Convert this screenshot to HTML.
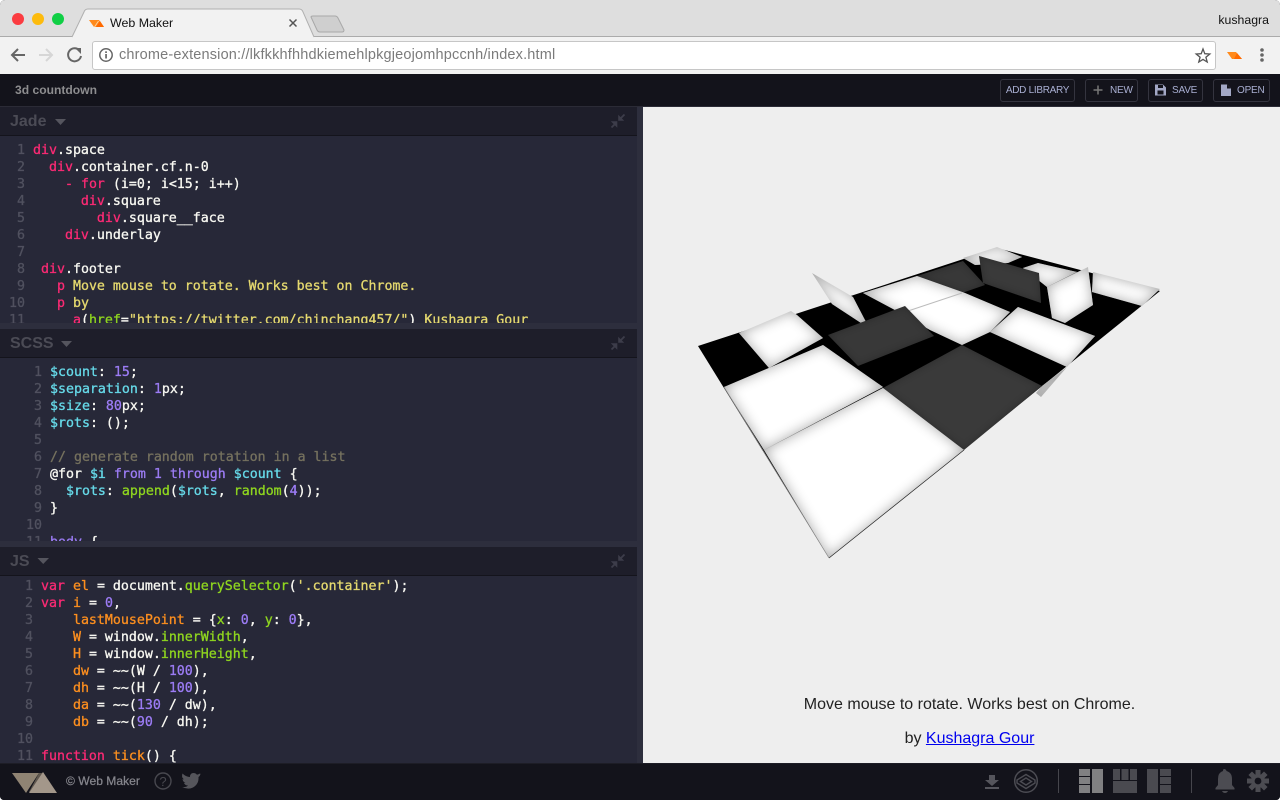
<!DOCTYPE html>
<html><head><meta charset="utf-8"><title>Web Maker</title>
<style>
html,body{margin:0;padding:0;background:#fff;width:1280px;height:800px;overflow:hidden}
#w{position:absolute;left:0;top:0;width:1280px;height:800px;overflow:hidden;border-radius:5px 5px 4px 4px;background:#12121a;font-family:"Liberation Sans",sans-serif}
.a{position:absolute}
.code{position:absolute;left:0;width:637px;background:#272838;overflow:hidden}
pre{position:absolute;margin:0;top:0;font:13.28px/17px "DejaVu Sans Mono","Liberation Mono",monospace;color:#f8f8f2;white-space:pre;-webkit-text-stroke:.3px currentColor}
pre.n{color:#50515f;text-align:right}
.hd{position:absolute;left:0;width:637px;height:28px;background:#1e1e2a;border-bottom:1px solid #14141c}
.hd b{position:absolute;left:10px;top:6px;font-size:16px;color:#4b4b55}
.sp{position:absolute;left:0;width:637px;height:6px;background:#2d2e3d}
.btn{position:absolute;top:79px;height:21px;border:1px solid #34343f;border-radius:3px;font-size:10px;line-height:20px;color:#a9afd2;white-space:nowrap;letter-spacing:-.2px}
.btn span{top:1px!important}
.k{color:#fb2a74}.w{color:#f8f8f2}.y{color:#e5d96f}.g{color:#8fd61f}.c{color:#66d9e8}.p{color:#9c7cf5}.o{color:#fd8f1f}.m{color:#75715e}
</style></head><body><div id="w">

<!-- browser chrome -->
<div class="a" style="left:0;top:0;width:1280px;height:36px;background:#dedede"></div>
<div class="a" style="left:0;top:36px;width:1280px;height:1px;background:#ababab"></div>
<div class="a" style="left:0;top:37px;width:1280px;height:37px;background:#f2f2f2"></div>
<svg class="a" style="left:0;top:0" width="360" height="74">
<circle cx="18" cy="19" r="6" fill="#fb3c41"/><circle cx="38" cy="19" r="6" fill="#fdbb0d"/><circle cx="58" cy="19" r="6" fill="#10cf45"/>
<path d="M72 37L84 12Q85 9 88 9H299Q302 9 303 12L314 37" fill="#f2f2f2" stroke="#b0b0b0" stroke-width="1"/>
<path d="M311 17Q311 16 313 16H335Q337 16 338 18L344 30Q344 32 342 32H320Q318 32 317 30Z" fill="#cfcfcf" stroke="#a8a8a8"/>
<path d="M89 20H99L104 27H94Z" fill="#ff8a1c"/><path d="M96 27L100 21L104 27Z" fill="#ff6a00"/><path d="M94 27L98 21H99L95 27Z" fill="#ffd9a8"/>
<path d="M289.500 19.500L296.500 26.500M296.500 19.500L289.500 26.500" stroke="#555" stroke-width="1.500"/>
<path d="M25 55H12M18 49L12 55L18 61" fill="none" stroke="#666" stroke-width="2"/>
<path d="M52 55H39M46 49L52 55L46 61" fill="none" stroke="#d6d6d6" stroke-width="2"/>
<path d="M79.500 50.500A6.500 6.500 0 1 0 81 56" fill="none" stroke="#666" stroke-width="2"/><path d="M75 48H81V54Z" fill="#666"/>
</svg>
<div class="a" style="left:110px;top:15px;font-size:12.4px;line-height:16px;color:#111">Web Maker</div>
<div class="a" style="left:92px;top:41px;width:1122px;height:27px;background:#fff;border:1px solid #c6c6c6;border-radius:3px"></div>
<svg class="a" style="left:97px;top:46px" width="18" height="18"><circle cx="9" cy="9" r="6.200" fill="none" stroke="#666" stroke-width="1.500"/><rect x="8.200" y="8" width="1.700" height="4.500" fill="#666"/><rect x="8.200" y="5.300" width="1.700" height="1.700" fill="#666"/></svg>
<div class="a" style="left:119px;top:47px;font-size:14.5px;line-height:17px;color:#7b7b7b;white-space:nowrap;letter-spacing:.175px"><span>chrome-extension://lkfkkhfhhdkiemehlpkgjeojomhpccnh/index.html</span></div>
<div class="a" style="top:13px;text-align:right;font-size:12.3px;line-height:14px;color:#111;white-space:nowrap;left:1198px;width:71px">kushagra</div>
<svg class="a" style="left:1190px;top:44px" width="85" height="24">
<path d="M13 5L14.800 9.700L19.800 10L15.900 13.200L17.200 18L13 15.400L8.800 18L10.100 13.200L6.200 10L11.200 9.700Z" fill="none" stroke="#555" stroke-width="1.300"/>
<path d="M37 8H46L52 15H42Z" fill="#ff8a1c"/><path d="M44 15L47 9L52 15Z" fill="#ff6a00"/>
<circle cx="72" cy="6" r="1.800" fill="#666"/><circle cx="72" cy="11" r="1.800" fill="#666"/><circle cx="72" cy="16" r="1.800" fill="#666"/>
</svg>

<!-- app header -->
<div class="a" style="left:0;top:74px;width:1280px;height:32px;background:#13131b"></div>
<div class="a" style="left:0;top:106px;width:1280px;height:1px;background:#2b2b36"></div>
<div class="a" style="left:15px;top:83px;font-size:12.1px;line-height:15px;font-weight:bold;color:#8d8d8f;white-space:nowrap">3d countdown</div>
<div class="btn" style="left:1000px;width:73px;text-align:center;line-height:22px;letter-spacing:-.3px">ADD LIBRARY</div>
<div class="btn" style="left:1085px;width:51px"><span class="a" style="left:24px;top:0">NEW</span></div>
<div class="btn" style="left:1148px;width:53px"><span class="a" style="left:23px;top:0">SAVE</span></div>
<div class="btn" style="left:1213px;width:55px"><span class="a" style="left:23px;top:0">OPEN</span></div>
<svg class="a" style="left:1085px;top:79px" width="190" height="23">
<path d="M13 6.500V15.500M8.500 11H17.500" stroke="#777" stroke-width="1.500"/>
<path d="M70 5.500H78L81 8.500V16.500H70Z" fill="#a3a8c6"/><rect x="73" y="6" width="5" height="3" fill="#13131b"/><rect x="72.500" y="11.500" width="6" height="4" fill="#13131b"/>
<path d="M136 5.500H142L146 9.500V17H136Z" fill="#a3a8c6"/><path d="M142 5.500V9.500H146Z" fill="#13131b"/>
</svg>

<!-- Panels -->
<div class="hd" style="top:107px"><b>Jade</b></div>
<div class="code" style="top:136px;height:187px">
<pre class="n" style="left:0;width:25px;top:6px">1
2
3
4
5
6
7
8
9
10
11</pre>
<pre style="left:33px;top:6px"><span class="k">div</span>.space
  <span class="k">div</span>.container.cf.n-0
    <span class="k">-</span> <span class="k">for</span> (i=0; i&lt;15; i++)
      <span class="k">div</span>.square
        <span class="k">div</span>.square__face
    <span class="k">div</span>.underlay

 <span class="k">div</span>.footer
   <span class="k">p</span> <span class="y">Move mouse to rotate. Works best on Chrome.</span>
   <span class="k">p</span> <span class="y">by</span>
     <span class="k">a</span>(<span class="g">href</span>=<span class="y">"https://twitter.com/chinchang457/"</span>) <span class="y">Kushagra Gour</span></pre>
</div>
<div class="sp" style="top:323px"></div>
<div class="hd" style="top:329px"><b>SCSS</b></div>
<div class="code" style="top:358px;height:183px">
<pre class="n" style="left:0;width:42px;top:6px">1
2
3
4
5
6
7
8
9
10
11</pre>
<pre style="left:50px;top:6px"><span class="c">$count</span>: <span class="p">15</span>;
<span class="c">$separation</span>: <span class="p">1</span>px;
<span class="c">$size</span>: <span class="p">80</span>px;
<span class="c">$rots</span>: ();

<span class="m">// generate random rotation in a list</span>
@for <span class="c">$i</span> <span class="p">from 1 through</span> <span class="c">$count</span> {
  <span class="c">$rots</span>: <span class="g">append</span>(<span class="c">$rots</span>, <span class="g">random</span>(<span class="p">4</span>));
}

<span class="p">body</span> {</pre>
</div>
<div class="sp" style="top:541px"></div>
<div class="hd" style="top:547px"><b>JS</b></div>
<div class="code" style="top:576px;height:187px">
<pre class="n" style="left:0;width:33px;top:2px">1
2
3
4
5
6
7
8
9
10
11</pre>
<pre style="left:41px;top:2px"><span class="k">var</span> <span class="o">el</span> = document.<span class="g">querySelector</span>(<span class="y">'.container'</span>);
<span class="k">var</span> <span class="o">i</span> = <span class="p">0</span>,
    <span class="o">lastMousePoint</span> = {<span class="g">x</span>: <span class="p">0</span>, <span class="g">y</span>: <span class="p">0</span>},
    <span class="o">W</span> = window.<span class="g">innerWidth</span>,
    <span class="o">H</span> = window.<span class="g">innerHeight</span>,
    <span class="o">dw</span> = ~~(W / <span class="p">100</span>),
    <span class="o">dh</span> = ~~(H / <span class="p">100</span>),
    <span class="o">da</span> = ~~(<span class="p">130</span> / dw),
    <span class="o">db</span> = ~~(<span class="p">90</span> / dh);

<span class="k">function</span> <span class="o">tick</span>() {</pre>
</div>
<svg class="a" style="left:0;top:107px" width="637" height="470">
<path d="M55 12H66L60.500 18Z" fill="#55555e"/>
<path d="M61 234H72L66.500 240Z" fill="#55555e"/>
<path d="M37.500 451H49L43.200 457Z" fill="#55555e"/>
<g fill="#3d3d4a" stroke="#3d3d4a">
<g stroke-width="1.800"><path d="M624.500 7.500L619.500 12.500" fill="none"/><path d="M618.500 8.500V13.500H623.500Z" stroke-width=".6"/><path d="M611.500 20.500L616 16" fill="none"/><path d="M611.500 14.500H617V20Z" stroke-width=".6"/></g>
<g stroke-width="1.800" transform="translate(0 222)"><path d="M624.500 7.500L619.500 12.500" fill="none"/><path d="M618.500 8.500V13.500H623.500Z" stroke-width=".6"/><path d="M611.500 20.500L616 16" fill="none"/><path d="M611.500 14.500H617V20Z" stroke-width=".6"/></g>
<g stroke-width="1.800" transform="translate(0 440)"><path d="M624.500 7.500L619.500 12.500" fill="none"/><path d="M618.500 8.500V13.500H623.500Z" stroke-width=".6"/><path d="M611.500 20.500L616 16" fill="none"/><path d="M611.500 14.500H617V20Z" stroke-width=".6"/></g>
</g>
</svg>
<div class="a" style="left:637px;top:107px;width:6px;height:656px;background:#2d2e3d"></div>

<!-- Preview -->
<div class="a" style="left:643px;top:107px;width:637px;height:656px;background:#eeeeee"></div>
<svg class="a" style="left:643px;top:107px" width="637" height="656" viewBox="643 107 637 656">
<defs>
<filter id="s" x="-10%" y="-10%" width="120%" height="120%" color-interpolation-filters="sRGB">
<feGaussianBlur in="SourceAlpha" stdDeviation="6.500" result="b"/>
<feComponentTransfer in="b" result="i"><feFuncA type="table" tableValues=".85 0"/></feComponentTransfer>
<feFlood flood-color="#999"/><feComposite in2="i" operator="in" result="t"/>
<feComposite in="t" in2="SourceAlpha" operator="in" result="u"/>
<feMerge><feMergeNode in="SourceGraphic"/><feMergeNode in="u"/></feMerge>
</filter>
<filter id="d" x="-10%" y="-10%" width="120%" height="120%" color-interpolation-filters="sRGB">
<feGaussianBlur in="SourceAlpha" stdDeviation="4" result="b"/>
<feComponentTransfer in="b" result="i"><feFuncA type="table" tableValues=".25 0"/></feComponentTransfer>
<feFlood flood-color="#000"/><feComposite in2="i" operator="in" result="t"/>
<feComposite in="t" in2="SourceAlpha" operator="in" result="u"/>
<feMerge><feMergeNode in="SourceGraphic"/><feMergeNode in="u"/></feMerge>
</filter>
</defs>
<!-- black floor -->
<polygon points="698,346 997,248 1160,291 829,558" fill="#000"/>
<!-- back row -->
<polygon points="1093,272 1160,289 1142,306 1092,292" fill="#fff" filter="url(#s)"/>
<polygon points="1038,263 1077,272 1047,287 1023,268" fill="#fff" filter="url(#s)"/>
<polygon points="963,258 997,247 1022,257 1008,263 975,265" fill="#fff" filter="url(#s)"/>
<polygon points="917,276 963,261 985,285 962,293" fill="#383838" filter="url(#d)"/>
<polygon points="863,293 917,276 965,293 1010,312 990,332 962,345 930,330 893,309" fill="#fff" filter="url(#s)"/>
<line x1="905" y1="312" x2="962" y2="293" stroke="#bbb" stroke-width="1"/>
<!-- left -->
<polygon points="739,333 791,311 797,315 823,338 769,368" fill="#fff" filter="url(#s)"/>
<polygon points="812,273 853,297 866,322 861,323 832,304" fill="#fff" filter="url(#s)"/>
<!-- mid -->
<polygon points="1018,307 1095,336 1067,367 990,332" fill="#fff" filter="url(#s)"/>
<polygon points="1047,287 1088,267 1093,305 1065,323 1052,318" fill="#fff" filter="url(#s)"/>
<polygon points="979,256 1039,273 1041,303 983,283" fill="#3a3a3a" filter="url(#d)"/>
<polygon points="828,335 905,306 934,336 858,366" fill="#383838" filter="url(#d)"/>
<!-- flap under right edge -->
<polygon points="1042,386 1067,367 1041,397 1036,393" fill="#ddd" filter="url(#s)"/>
<!-- front -->
<polygon points="883,388 962,345 1042,386 964,450" fill="#3a3a3a" filter="url(#d)"/>
<polygon points="724,387 823,345 883,387 764,450" fill="#fff" filter="url(#s)"/>
<polygon points="764,450 883,388 964,450 829,558" fill="#fff" filter="url(#s)"/>
<line x1="829" y1="558" x2="964" y2="450" stroke="#222" stroke-width=".7"/>
<line x1="724" y1="387" x2="829" y2="558" stroke="#888" stroke-width=".7"/>
</svg>
<div class="a" style="left:643px;top:696px;width:653px;text-align:center;font-size:16px;line-height:18px;color:#222;white-space:nowrap">Move mouse to rotate. Works best on Chrome.</div>
<div class="a" style="left:643px;top:730px;width:653px;text-align:center;font-size:16px;line-height:18px;color:#222;white-space:nowrap">by <span style="color:#0000ee;text-decoration:underline">Kushagra Gour</span></div>

<!-- Footer -->
<div class="a" style="left:0;top:763px;width:1280px;height:37px;background:#13131b;border-top:1px solid #1d1d26;box-sizing:border-box"></div>
<svg class="a" style="left:0;top:763px" width="220" height="37">
<polygon points="12,10 39,10 26,30" fill="#8f8373"/><polygon points="39,10 44,10 33,29 29,29" fill="#5f574e"/><polygon points="43,9 57,30 29,30" fill="#a3978a"/>
<circle cx="163" cy="18" r="8" fill="none" stroke="#48484f" stroke-width="1.400"/>
<text x="163" y="23" font-family="Liberation Sans" font-size="13" fill="#48484f" text-anchor="middle">?</text>
<path d="M200 10.500Q198.500 11.500 197 11.700Q195.500 10 193.500 10Q190 10 190 14Q186 14 182.500 10.500Q181 14 184 16.500L182.500 16Q183 19 185.500 20L184 20Q185 22.500 188 22.500Q186 24.500 182 24Q188 27 193 24.500Q199 21 198.500 14Q200 13 200.500 11Z" fill="#55555b"/>
</svg>
<div class="a" style="left:66px;top:774px;font-size:12.1px;line-height:15px;color:#85858c;white-space:nowrap;-webkit-text-stroke:.25px #85858c">© Web Maker</div>
<svg class="a" style="left:960px;top:763px" width="320" height="37" fill="#55555c">
<path d="M29 12H35V17H39L32 23L25 17H29Z"/><rect x="25" y="24" width="14" height="2"/>
<circle cx="66" cy="18" r="11.300" fill="none" stroke="#4c4c53" stroke-width="1.500"/>
<path d="M66 11.500L75 17V20L66 25.500L57 20V17Z M66 15L60.500 18.500L66 22L71.500 18.500Z" fill="none" stroke="#4c4c53" stroke-width="1.400"/>
<rect x="98" y="6" width="1" height="24" fill="#46464d"/>
<rect x="119" y="6" width="11" height="7" fill="#808082"/><rect x="119" y="14" width="11" height="7" fill="#808082"/><rect x="119" y="22" width="11" height="8" fill="#808082"/><rect x="132" y="6" width="11" height="24" fill="#808082"/>
<g fill="#4a4a50"><rect x="153" y="6" width="7" height="11"/><rect x="161.500" y="6" width="7" height="11"/><rect x="170" y="6" width="7" height="11"/><rect x="153" y="18" width="24" height="12"/>
<rect x="187" y="6" width="11" height="24"/><rect x="200" y="6" width="11" height="7"/><rect x="200" y="14" width="11" height="7"/><rect x="200" y="22" width="11" height="8"/></g>
<rect x="231" y="6" width="1" height="24" fill="#46464d"/>
<path d="M264 6Q266 6 266.500 8Q272 9.500 272 16V22L274.500 25V26.500H255.500V25L258 22V16Q258 9.500 263 8Q263 6 264 6Z" fill="#4c4c52"/><path d="M262 28H268Q267 30 265 30Q263 30 262 28Z" fill="#4c4c52"/>
<g fill="#4c4c52"><circle cx="298" cy="18" r="7"/><rect x="295.500" y="7" width="5" height="22"/><rect x="287" y="15.500" width="22" height="5"/><rect x="295.500" y="7" width="5" height="22" transform="rotate(45 298 18)"/><rect x="295.500" y="7" width="5" height="22" transform="rotate(-45 298 18)"/></g>
<circle cx="298" cy="18" r="3.400" fill="#13131b"/>
</svg>
</div></body></html>
